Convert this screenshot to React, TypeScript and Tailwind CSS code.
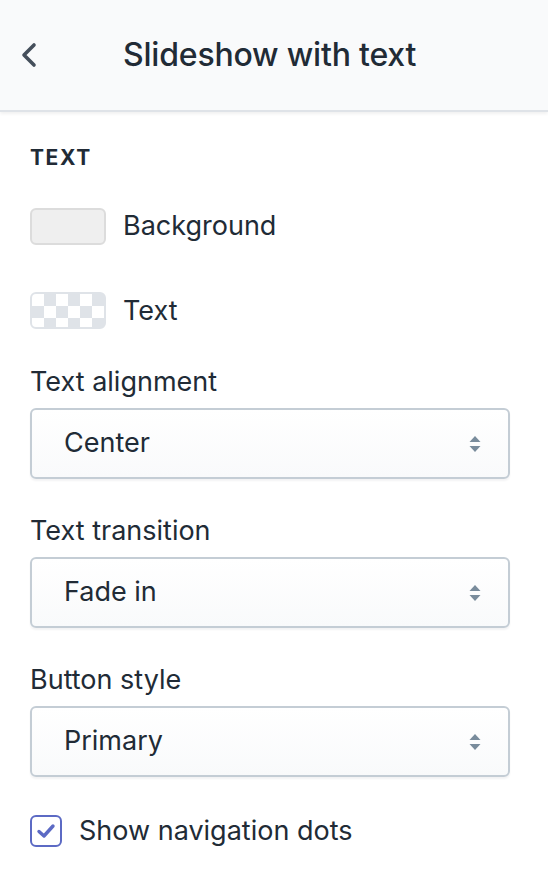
import React from "react";

function Arrows() {
  return (
    <svg width="14" height="20" viewBox="0 0 14 20" className="shrink-0">
      <path d="M7 2 L12.5 8 H1.5 Z" fill="#798c9c" />
      <path d="M7 18 L12.5 12 H1.5 Z" fill="#798c9c" />
    </svg>
  );
}

function Select({ label, value }: { label: string; value: string }) {
  return (
    <div className="flex flex-col">
      <div className="text-[27px] leading-[32px] text-[#212b36] mb-[10px]">{label}</div>
      <div className="h-[71px] rounded-[6px] border-2 border-[#c4cdd5] bg-gradient-to-b from-white to-[#f9fafb] shadow-[0_2px_2px_rgba(22,29,37,0.05)] flex items-center justify-between pl-[32px] pr-[26px]">
        <span className="text-[27px] text-[#212b36]">{value}</span>
        <Arrows />
      </div>
    </div>
  );
}

export default function App() {
  return (
    <div className="w-[548px] h-[880px] bg-white" style={{ fontFamily: "Inter, 'Noto Sans', sans-serif" }}>
      <div className="h-[112px] bg-[#f9fafb] border-b-2 border-[#dfe3e8] shadow-[0_2px_3px_rgba(0,0,0,0.06)] flex items-center relative">
        <div className="w-[123px] pl-[20px] flex items-center">
          <svg width="18" height="28" viewBox="0 0 18 28">
            <path d="M14 4 L4 14 L14 24" fill="none" stroke="#454f5b" strokeWidth="3.6" strokeLinecap="round" strokeLinejoin="round" />
          </svg>
        </div>
        <div className="text-[32px] font-medium text-[#212b36] tracking-[-0.2px]">Slideshow with text</div>
      </div>
      <div className="pl-[30px] pr-[38px] pt-[34px] flex flex-col">
        <div className="text-[21px] font-bold tracking-[1.6px] text-[#212b36] leading-[24px]">TEXT</div>
        <div className="flex items-center gap-[17px] mt-[36px]">
          <div className="w-[76px] h-[37px] rounded-[6px] border-2 border-[#dcdcdc] bg-[#efefef]" />
          <span className="text-[27px] text-[#212b36]">Background</span>
        </div>
        <div className="flex items-center gap-[17px] mt-[44px]">
          <div
            className="w-[76px] h-[37px] rounded-[6px] border-2 border-[#dfe3e8] overflow-hidden"
            style={{
              backgroundColor: "#ffffff",
              backgroundImage:
                "linear-gradient(45deg, #dfe3e8 25%, transparent 25%, transparent 75%, #dfe3e8 75%), linear-gradient(45deg, #dfe3e8 25%, transparent 25%, transparent 75%, #dfe3e8 75%)",
              backgroundSize: "24px 24px",
              backgroundPosition: "0 0, 12px 12px",
            }}
          />
          <span className="text-[27px] text-[#212b36]">Text</span>
        </div>
        <div className="mt-[35px] flex flex-col gap-[36px]">
          <Select label="Text alignment" value="Center" />
          <Select label="Text transition" value="Fade in" />
          <Select label="Button style" value="Primary" />
        </div>
        <div className="flex items-center gap-[17px] mt-[34px]">
          <div className="w-[32px] h-[32px] rounded-[6px] border-2 border-[#5c6ac4] bg-white flex items-center justify-center">
            <svg width="20" height="16" viewBox="0 0 20 16">
              <path d="M3 8.5 L8 13 L17 3" fill="none" stroke="#5c6ac4" strokeWidth="3.4" strokeLinecap="round" strokeLinejoin="round" />
            </svg>
          </div>
          <span className="text-[27px] text-[#212b36]">Show navigation dots</span>
        </div>
      </div>
    </div>
  );
}
